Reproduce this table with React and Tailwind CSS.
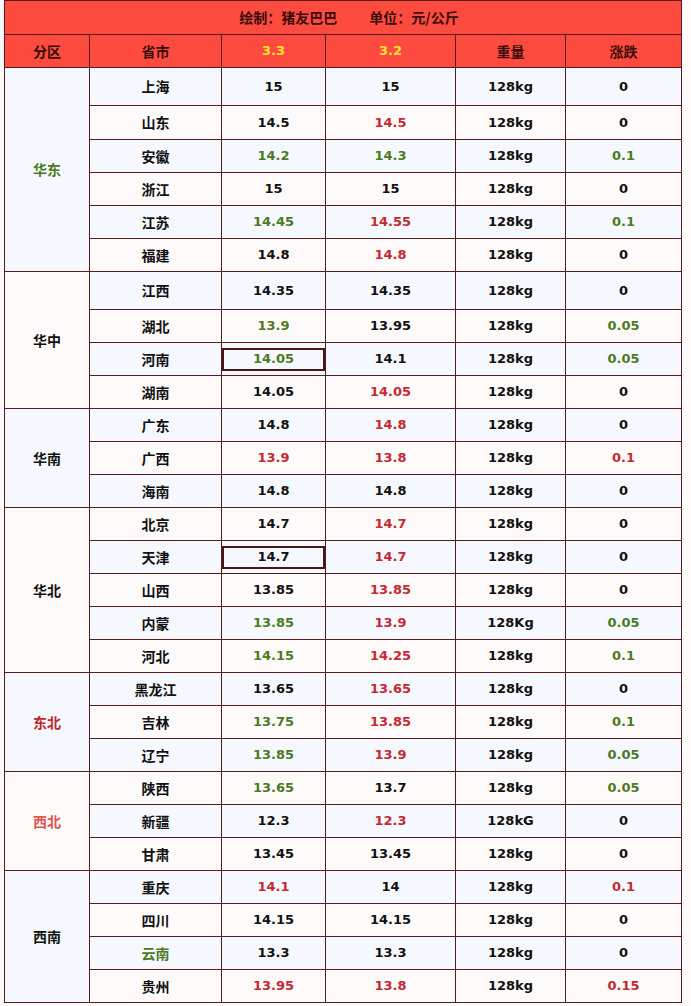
import React from 'react';

const RED = 'text-[#c42a32]';
const GREEN = 'text-[#4d7a1f]';
const BLACK = 'text-[#111111]';

const tone = { k: BLACK, r: RED, g: GREEN };

// [province, 3.3, 3.2, weight, change, colours(3.3,3.2,change), flags]
const GROUPS = [
  {
    name: '华东',
    color: GREEN,
    rows: [
      ['上海', '15', '15', '128kg', '0', 'kkk'],
      ['山东', '14.5', '14.5', '128kg', '0', 'krk'],
      ['安徽', '14.2', '14.3', '128kg', '0.1', 'ggg'],
      ['浙江', '15', '15', '128kg', '0', 'kkk'],
      ['江苏', '14.45', '14.55', '128kg', '0.1', 'grg'],
      ['福建', '14.8', '14.8', '128kg', '0', 'krk'],
    ],
  },
  {
    name: '华中',
    color: BLACK,
    rows: [
      ['江西', '14.35', '14.35', '128kg', '0', 'kkk'],
      ['湖北', '13.9', '13.95', '128kg', '0.05', 'gkg'],
      ['河南', '14.05', '14.1', '128kg', '0.05', 'gkg', 'box'],
      ['湖南', '14.05', '14.05', '128kg', '0', 'krk'],
    ],
  },
  {
    name: '华南',
    color: BLACK,
    rows: [
      ['广东', '14.8', '14.8', '128kg', '0', 'krk'],
      ['广西', '13.9', '13.8', '128kg', '0.1', 'rrr'],
      ['海南', '14.8', '14.8', '128kg', '0', 'kkk'],
    ],
  },
  {
    name: '华北',
    color: BLACK,
    rows: [
      ['北京', '14.7', '14.7', '128kg', '0', 'krk'],
      ['天津', '14.7', '14.7', '128kg', '0', 'krk', 'box'],
      ['山西', '13.85', '13.85', '128kg', '0', 'krk'],
      ['内蒙', '13.85', '13.9', '128Kg', '0.05', 'grg'],
      ['河北', '14.15', '14.25', '128kg', '0.1', 'grg'],
    ],
  },
  {
    name: '东北',
    color: 'text-[#c0262c]',
    rows: [
      ['黑龙江', '13.65', '13.65', '128kg', '0', 'krk'],
      ['吉林', '13.75', '13.85', '128kg', '0.1', 'grg'],
      ['辽宁', '13.85', '13.9', '128kg', '0.05', 'grg'],
    ],
  },
  {
    name: '西北',
    color: 'text-[#e0554a]',
    rows: [
      ['陕西', '13.65', '13.7', '128kg', '0.05', 'gkg'],
      ['新疆', '12.3', '12.3', '128kG', '0', 'krk'],
      ['甘肃', '13.45', '13.45', '128kg', '0', 'kkk'],
    ],
  },
  {
    name: '西南',
    color: BLACK,
    rows: [
      ['重庆', '14.1', '14', '128kg', '0.1', 'rkr'],
      ['四川', '14.15', '14.15', '128kg', '0', 'kkk'],
      ['云南', '13.3', '13.3', '128kg', '0', 'kkk', 'greenName'],
      ['贵州', '13.95', '13.8', '128kg', '0.15', 'rrr'],
    ],
  },
];

const TALL = { 上海: 'h-[38px]', 山东: 'h-[34px]', 江西: 'h-[38px]' };

const cell = 'border border-[#561c1c] text-center align-middle p-0';
const num = "font-['DejaVu_Sans',sans-serif] font-bold text-[13px]";
const cjk = "font-['Noto_Sans_CJK_SC',sans-serif] font-bold text-[14px]";

export default function App() {
  let idx = 0;
  return (
    <div className="min-h-screen bg-[#fffafa]">
      <table className="table-fixed border-collapse ml-[4px] w-[677px]">
        <colgroup>
          <col className="w-[85px]" />
          <col className="w-[132px]" />
          <col className="w-[104px]" />
          <col className="w-[130px]" />
          <col className="w-[110px]" />
          <col className="w-[116px]" />
        </colgroup>
        <thead>
          <tr className="h-[34px] bg-[#fd4b3f]">
            <td colSpan={6} className={`${cell} ${cjk} text-[#3a0c0c]`}>
              <span className="inline-flex gap-[32px] pl-[12px]">
                <span>绘制：猪友巴巴</span>
                <span>单位：元/公斤</span>
              </span>
            </td>
          </tr>
          <tr className="h-[33px] bg-[#fd4b3f]">
            <td className={`${cell} ${cjk} text-[#3a0c0c]`}>分区</td>
            <td className={`${cell} ${cjk} text-[#3a0c0c]`}>省市</td>
            <td className={`${cell} ${num} text-[#ffe22e]`}>3.3</td>
            <td className={`${cell} ${num} text-[#ffe22e]`}>3.2</td>
            <td className={`${cell} ${cjk} text-[#3a0c0c]`}>重量</td>
            <td className={`${cell} ${cjk} text-[#3a0c0c]`}>涨跌</td>
          </tr>
        </thead>
        <tbody>
          {GROUPS.map((g, gi) =>
            g.rows.map((r, ri) => {
              const [prov, a, b, w, d, c, flag] = r;
              const bg = idx++ % 2 === 0 ? 'bg-[#f5f9ff]' : 'bg-[#fffafa]';
              const gbg = gi % 2 === 0 ? 'bg-[#f5f9ff]' : 'bg-[#fffafa]';
              return (
                <tr key={prov} className={`${TALL[prov] || 'h-[33px]'} ${bg}`}>
                  {ri === 0 && (
                    <td rowSpan={g.rows.length} className={`${cell} ${cjk} ${gbg} ${g.color}`}>
                      {g.name}
                    </td>
                  )}
                  <td className={`${cell} ${cjk} ${flag === 'greenName' ? GREEN : BLACK}`}>{prov}</td>
                  <td className={`${cell} ${num} ${tone[c[0]]}`}>
                    {flag === 'box' ? (
                      <div className="h-[23px] border-2 border-[#4a1717] flex items-center justify-center">
                        {a}
                      </div>
                    ) : (
                      a
                    )}
                  </td>
                  <td className={`${cell} ${num} ${tone[c[1]]}`}>{b}</td>
                  <td className={`${cell} ${num} ${BLACK}`}>{w}</td>
                  <td className={`${cell} ${num} ${tone[c[2]]}`}>{d}</td>
                </tr>
              );
            })
          )}
        </tbody>
      </table>
    </div>
  );
}
